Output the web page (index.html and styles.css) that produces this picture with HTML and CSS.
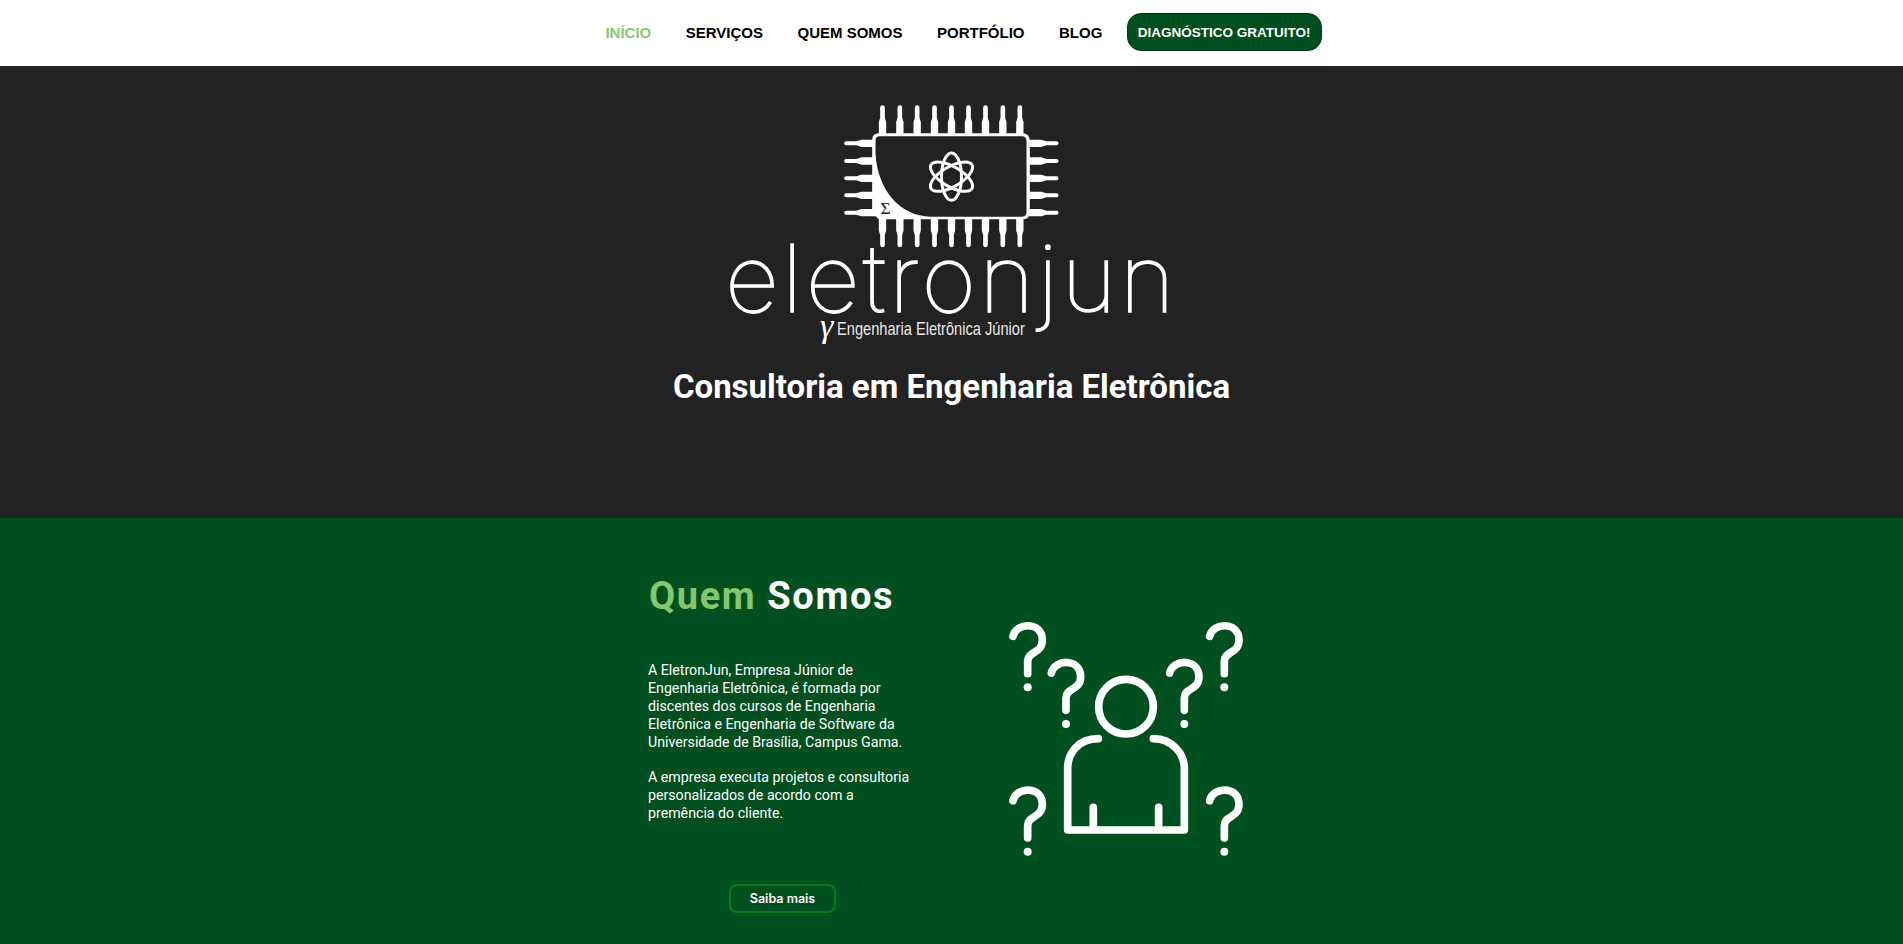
FILE: index.html
```html
<!DOCTYPE html>
<html lang="pt-BR">
<head>
<meta charset="utf-8">
<title>EletronJun</title>
<link rel="stylesheet" href="styles.css">
</head>
<body>
<header class="topbar">
  <nav class="menu">
    <a class="menu-link is-active" href="#">INÍCIO</a>
    <a class="menu-link" href="#">SERVIÇOS</a>
    <a class="menu-link" href="#">QUEM SOMOS</a>
    <a class="menu-link" href="#">PORTFÓLIO</a>
    <a class="menu-link" href="#">BLOG</a>
    <a class="menu-cta" href="#">DIAGNÓSTICO GRATUITO!</a>
  </nav>
</header>
<section class="hero">
  <svg class="chip" viewBox="4.5 0 780 510" aria-hidden="true">
    <defs>
      <path id="pin-v" d="M-7 -35 a7 7 0 0 1 14 0 V-5 L11 8 V52 H-11 V8 L-7 -5Z"/>
      <path id="pin-h" d="M-38 -6 a6 6 0 0 0 0 12 H-8 L8 11 H52 V-11 H8 L-8 -6Z"/>
    </defs>
    <g class="chip-fill">
      <use href="#pin-v" x="186" y="88"/><use href="#pin-v" x="238" y="88"/><use href="#pin-v" x="290" y="88"/><use href="#pin-v" x="342" y="88"/><use href="#pin-v" x="393" y="88"/><use href="#pin-v" x="444" y="88"/><use href="#pin-v" x="495" y="88"/><use href="#pin-v" x="547" y="88"/><use href="#pin-v" x="598" y="88"/>
      <g transform="translate(0 518) scale(1 -1)">
        <use href="#pin-v" x="186" y="88"/><use href="#pin-v" x="238" y="88"/><use href="#pin-v" x="290" y="88"/><use href="#pin-v" x="342" y="88"/><use href="#pin-v" x="393" y="88"/><use href="#pin-v" x="444" y="88"/><use href="#pin-v" x="495" y="88"/><use href="#pin-v" x="547" y="88"/><use href="#pin-v" x="598" y="88"/>
      </g>
      <use href="#pin-h" x="115" y="160"/><use href="#pin-h" x="115" y="213"/><use href="#pin-h" x="115" y="265"/><use href="#pin-h" x="115" y="316"/><use href="#pin-h" x="115" y="368"/>
      <g transform="translate(785 0) scale(-1 1)">
        <use href="#pin-h" x="115" y="160"/><use href="#pin-h" x="115" y="213"/><use href="#pin-h" x="115" y="265"/><use href="#pin-h" x="115" y="316"/><use href="#pin-h" x="115" y="368"/>
      </g>
      <path d="M175 130H605Q628 130 628 155V365Q628 388 605 388H175L155 368V150Q155 130 175 130Z"/>
    </g>
    <path class="chip-hole" d="M178 139H604Q618 139 618 153V366Q618 380 604 380H330C240 380 170 300 165 190V152Q165 139 178 139Z"/>
    <g class="atom">
      <ellipse cx="393" cy="260" rx="30" ry="71"/>
      <ellipse cx="393" cy="260" rx="30" ry="71" transform="rotate(60 393 260)"/>
      <ellipse cx="393" cy="260" rx="30" ry="71" transform="rotate(-60 393 260)"/>
    </g>
    <text class="sigma" x="195" y="371">Σ</text>
  </svg>
  <div class="wordmark">eletronjun</div>
  <div class="tagline"><span class="gamma">γ</span><span class="tagline-text">Engenharia Eletrônica Júnior</span></div>
  <h1 class="hero-title">Consultoria em Engenharia Eletrônica</h1>
</section>
<section class="about">
  <div class="about-copy">
    <h2 class="about-title"><span class="accent">Quem</span> Somos</h2>
    <p class="about-text">A EletronJun, Empresa Júnior de Engenharia Eletrônica, é formada por discentes dos cursos de Engenharia Eletrônica e Engenharia de Software da Universidade de Brasília, Campus Gama.</p>
    <p class="about-text">A empresa executa projetos e consultoria personalizados de acordo com a premência do cliente.</p>
    <a class="about-button" href="#">Saiba mais</a>
  </div>
  <svg class="about-art" viewBox="0 0 810 780" aria-hidden="true">
    <defs>
      <g id="qmark">
        <path class="art-line" d="M69 79C78 36 157 34 157 90C157 132 113 122 113 154V191"/>
        <circle class="art-dot" cx="113" cy="232" r="12"/>
      </g>
    </defs>
    <use href="#qmark"/>
    <use href="#qmark" x="115" y="110"/>
    <use href="#qmark" x="470" y="110"/>
    <use href="#qmark" x="590"/>
    <use href="#qmark" y="493"/>
    <use href="#qmark" x="590" y="493"/>
    <circle class="art-line" cx="408" cy="290" r="82"/>
    <path class="art-line" d="M325 386C265 386 233 430 233 475V660H583V475C583 430 545 386 490 386"/>
    <path class="art-line" d="M310 592V658M506 592V658"/>
  </svg>
</section>
</body>
</html>
```
FILE: styles.css
```css
* { box-sizing: border-box; }
html, body { margin: 0; padding: 0; }
body { font-family: Roboto, "Liberation Sans", sans-serif; background: #fff; overflow: hidden; height: 944px; }

.topbar { height: 66px; background: #fff; display: flex; justify-content: center; align-items: center; padding: 0 0 2px 24px; }
.menu { display: flex; align-items: center; gap: 34.5px; }
.menu-link { font: 700 15px "Liberation Sans", Arial, sans-serif; color: #000; text-decoration: none; }
.menu-link.is-active { color: #8bc96f; }
.menu-cta { font: 700 13.5px "Liberation Sans", Arial, sans-serif; color: #fff; background: #00501f; border: 1px solid #00390f; border-radius: 14px; height: 38px; padding: 0 10px; display: flex; align-items: center; text-decoration: none; margin-left: -10px; }

.hero { height: 452px; background: #222; padding-top: 24px; display: flex; flex-direction: column; align-items: center; color: #fff; }
.chip { width: 260px; height: 170px; display: block; flex: none; }
.chip-fill { fill: #fff; }
.chip-hole { fill: #222; }
.atom { fill: none; stroke: #fff; stroke-width: 9; }
.sigma { font: 52px "Liberation Serif", serif; fill: #222; text-anchor: middle; }
.wordmark { font: 100 94px/70px Inter, sans-serif; letter-spacing: 3.4px; color: #fff; height: 70px; margin-top: -17px; -webkit-text-stroke: 1.5px #fff; white-space: nowrap; }
.tagline { display: flex; align-items: center; height: 20px; margin-top: 6px; margin-left: -58px; }
.gamma { font: italic 34px/20px "Liberation Serif", serif; width: 17px; flex: none; position: relative; top: -3px; }
.tagline-text { font: 300 19px "Liberation Sans", sans-serif; color: #e8e8e8; display: inline-block; transform: scaleX(.77); transform-origin: left center; width: 188px; white-space: nowrap; }
.hero-title { font: 700 33px/38px Roboto, sans-serif; margin: 29px 0 0; }

.about { height: 426px; background: #00501f; color: #fff; display: flex; padding-left: 648px; }
.about-copy { width: 272px; flex: none; }
.about-title { font: 700 38px/44px Roboto, sans-serif; letter-spacing: 1.6px; margin: 56px 0 43px 1px; white-space: nowrap; }
.accent { color: #84c76c; }
.about-text { font: 400 14.2px/18px Roboto, sans-serif; margin: 0 0 17px; }
.about-button { display: flex; width: 107px; height: 29px; margin: 62px 0 0 81px; align-items: center; justify-content: center; border: 2px solid #0b7a1e; border-radius: 8px; color: #fff; font: 600 12.5px Inter, sans-serif; text-decoration: none; }
.about-art { width: 270px; height: 260px; margin: 92px 0 0 70px; flex: none; }
.art-line { fill: none; stroke: #fff; stroke-width: 23; stroke-linecap: round; stroke-linejoin: round; }
.art-dot { fill: #fff; }
```
